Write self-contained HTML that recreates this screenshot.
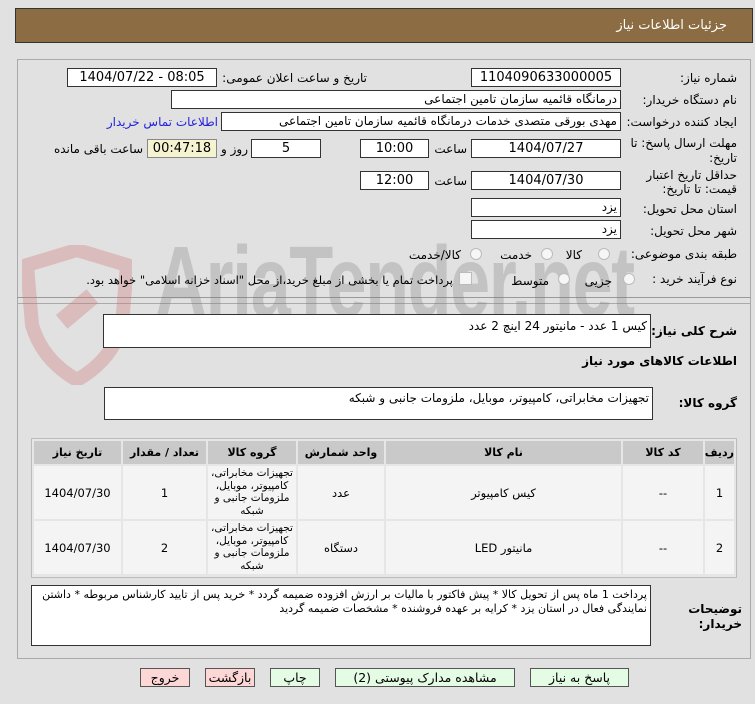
<!DOCTYPE html>
<html><head><meta charset="utf-8"><style>
body{margin:0;width:755px;height:704px;background:#e1e1e1;font-family:"DejaVu Sans",sans-serif;font-size:11.5px;color:#000;position:relative;overflow:hidden}
.a{position:absolute}
.box{position:absolute;background:#fff;border:1px solid #333;box-sizing:border-box;height:19px;line-height:17px;text-align:center;font-size:13px;overflow:hidden}
.r{position:absolute;direction:rtl;white-space:nowrap}
.lb{position:absolute;text-align:right;direction:rtl;white-space:nowrap;font-size:12px}
table{border-collapse:separate;border-spacing:2px;table-layout:fixed}
td,th{text-align:center;font-size:11.5px;padding:0;overflow:hidden}
th{background:#c9c9c9;height:23px;font-weight:bold;font-size:11px;white-space:nowrap}
td{background:#f4f4f4;height:53px}
.g{font-size:10.5px;line-height:12.5px;height:52px;overflow:hidden;padding-top:1px}
.btn{position:absolute;top:668px;height:19px;box-sizing:border-box;border:1px solid #555;text-align:center;line-height:17px;font-size:12.5px;background:#e4fbe4}
.red{background:#fdd6d6}
.rad{position:absolute;width:10px;height:10px;border:1px solid #bbb;border-radius:50%;background:#f6f6f6}
</style></head><body>
<div class="a" style="left:15px;top:8px;width:738px;height:35px;background:#8c6c42;border:1px solid #333;box-sizing:border-box"></div>
<div class="r" style="right:28px;top:18px;color:#fff;font-size:13px">جزئیات اطلاعات نیاز</div>
<div class="a" style="left:17px;top:59px;width:734px;height:600px;border:1px solid #aaa;box-sizing:border-box"></div>
<div class="a" style="left:17px;top:297px;width:734px;height:1px;background:#999"></div>
<div class="a" style="left:17px;top:303px;width:734px;height:1px;background:#aaa"></div>
<div class="a" style="left:155px;top:225px;font-size:100px;font-weight:bold;color:rgba(120,120,120,0.28);font-family:'Liberation Sans',sans-serif;letter-spacing:-2px;transform:scaleX(0.72);transform-origin:left">AriaTender.net</div>
<svg class="a" style="left:22px;top:245px" width="110" height="140"><path d="M55 5 L105 20 L100 80 Q90 115 55 135 Q20 115 10 80 L5 20 Z" fill="none" stroke="rgba(210,120,120,0.35)" stroke-width="14"/><rect x="35" y="55" width="40" height="18" fill="rgba(210,120,120,0.35)" transform="rotate(-40 55 64)"/></svg>

<div class="lb" style="right:18px;top:71px">شماره نیاز:</div>
<div class="box" style="left:471px;top:68px;width:150px">1104090633000005</div>
<div class="lb" style="right:388px;top:71px">تاریخ و ساعت اعلان عمومی:</div>
<div class="box" style="left:67px;top:68px;width:150px">1404/07/22 - 08:05</div>

<div class="lb" style="right:18px;top:93px">نام دستگاه خریدار:</div>
<div class="box" style="left:171px;top:90px;width:450px;text-align:right;padding-right:3px;direction:rtl;font-size:12px">درمانگاه قائمیه سازمان تامین اجتماعی</div>

<div class="lb" style="right:18px;top:115px">ایجاد کننده درخواست:</div>
<div class="box" style="left:221px;top:112px;width:400px;text-align:right;padding-right:3px;direction:rtl;font-size:12px">مهدی بورقی متصدی خدمات درمانگاه قائمیه سازمان تامین اجتماعی</div>
<div class="lb" style="right:537px;top:115px;color:#2222dd">اطلاعات تماس خریدار</div>

<div class="lb" style="right:18px;top:136px">مهلت ارسال پاسخ: تا</div>
<div class="lb" style="right:18px;top:151px">تاریخ:</div>
<div class="box" style="left:471px;top:139px;width:150px">1404/07/27</div>
<div class="lb" style="right:288px;top:142px">ساعت</div>
<div class="box" style="left:360px;top:139px;width:69px">10:00</div>
<div class="box" style="left:251px;top:139px;width:70px">5</div>
<div class="lb" style="right:507px;top:142px">روز و</div>
<div class="box" style="left:147px;top:139px;width:70px;background:#f5f3d0;border-color:#888">00:47:18</div>
<div class="lb" style="right:612px;top:142px">ساعت باقی مانده</div>

<div class="lb" style="right:18px;top:168px">حداقل تاریخ اعتبار</div>
<div class="lb" style="right:18px;top:182px">قیمت: تا تاریخ:</div>
<div class="box" style="left:471px;top:171px;width:150px">1404/07/30</div>
<div class="lb" style="right:288px;top:174px">ساعت</div>
<div class="box" style="left:360px;top:171px;width:69px">12:00</div>

<div class="lb" style="right:18px;top:202px">استان محل تحویل:</div>
<div class="box" style="left:471px;top:198px;width:150px;text-align:right;padding-right:3px;font-size:12px">یزد</div>
<div class="lb" style="right:18px;top:224px">شهر محل تحویل:</div>
<div class="box" style="left:471px;top:220px;width:150px;text-align:right;padding-right:3px;font-size:12px">یزد</div>

<div class="lb" style="right:18px;top:247px">طبقه بندی موضوعی:</div>
<div class="rad" style="left:598px;top:248px"></div><div class="lb" style="right:173px;top:248px">کالا</div>
<div class="rad" style="left:541px;top:248px"></div><div class="lb" style="right:223px;top:248px">خدمت</div>
<div class="rad" style="left:470px;top:248px"></div><div class="lb" style="right:294px;top:248px">کالا/خدمت</div>

<div class="lb" style="right:18px;top:272px">نوع فرآیند خرید :</div>
<div class="rad" style="left:623px;top:273px"></div><div class="lb" style="right:143px;top:274px">جزیی</div>
<div class="rad" style="left:558px;top:273px"></div><div class="lb" style="right:206px;top:274px">متوسط</div>
<div class="a" style="left:459px;top:272px;width:11px;height:11px;border:1px solid #bbb;background:#f6f6f6"></div>
<div class="lb" style="right:302px;top:273px;font-size:11.5px">پرداخت تمام یا بخشی از مبلغ خرید،از محل "اسناد خزانه اسلامی" خواهد بود.</div>

<div class="lb" style="right:18px;top:324px;font-weight:bold">شرح کلی نیاز:</div>
<div class="box" style="left:103px;top:314px;width:548px;height:34px;text-align:right;padding-right:3px;direction:rtl;line-height:22px;font-size:12px">کیس 1 عدد - مانیتور 24 اینچ 2 عدد</div>
<div class="lb" style="right:18px;top:354px;font-weight:bold">اطلاعات کالاهای مورد نیاز</div>
<div class="lb" style="right:18px;top:396px;font-weight:bold">گروه کالا:</div>
<div class="box" style="left:104px;top:387px;width:549px;height:33px;text-align:right;padding-right:3px;direction:rtl;line-height:20px;font-size:12px">تجهیزات مخابراتی، کامپیوتر، موبایل، ملزومات جانبی و شبکه</div>

<div class="a" style="left:31px;top:438px;width:706px;height:140px;border:1px solid #bbb;box-sizing:border-box;background:#e6e6e6;overflow:hidden">
<table dir="rtl" style="width:704px">
<colgroup><col style="width:29px"><col style="width:80px"><col style="width:235px"><col style="width:86px"><col style="width:88px"><col style="width:83px"><col></colgroup>
<tr><th>ردیف</th><th>کد کالا</th><th>نام کالا</th><th>واحد شمارش</th><th>گروه کالا</th><th>تعداد / مقدار</th><th>تاریخ نیاز</th></tr>
<tr><td>1</td><td>--</td><td>کیس کامپیوتر</td><td>عدد</td><td><div class="g">تجهیزات مخابراتی، کامپیوتر، موبایل، ملزومات جانبی و شبکه</div></td><td>1</td><td>1404/07/30</td></tr>
<tr><td>2</td><td>--</td><td>مانیتور LED</td><td>دستگاه</td><td><div class="g">تجهیزات مخابراتی، کامپیوتر، موبایل، ملزومات جانبی و شبکه</div></td><td>2</td><td>1404/07/30</td></tr>
</table></div>

<div class="lb" style="right:13px;top:602px;font-weight:bold">توضیحات</div>
<div class="lb" style="right:13px;top:617px;font-weight:bold">خریدار:</div>
<div class="box" style="left:31px;top:585px;width:620px;height:61px;text-align:right;padding:2px 3px;direction:rtl;line-height:14px;white-space:normal;font-size:11px">پرداخت 1 ماه پس از تحویل کالا * پیش فاکتور با مالیات بر ارزش افزوده ضمیمه گردد * خرید پس از تایید کارشناس مربوطه * داشتن نمایندگی فعال در استان یزد * کرایه بر عهده فروشنده * مشخصات ضمیمه گردید</div>

<div class="btn" style="left:530px;width:99px">پاسخ به نیاز</div>
<div class="btn" style="left:335px;width:180px">مشاهده مدارک پیوستی (2)</div>
<div class="btn" style="left:270px;width:50px">چاپ</div>
<div class="btn red" style="left:205px;width:50px">بازگشت</div>
<div class="btn red" style="left:140px;width:50px">خروج</div>
</body></html>
